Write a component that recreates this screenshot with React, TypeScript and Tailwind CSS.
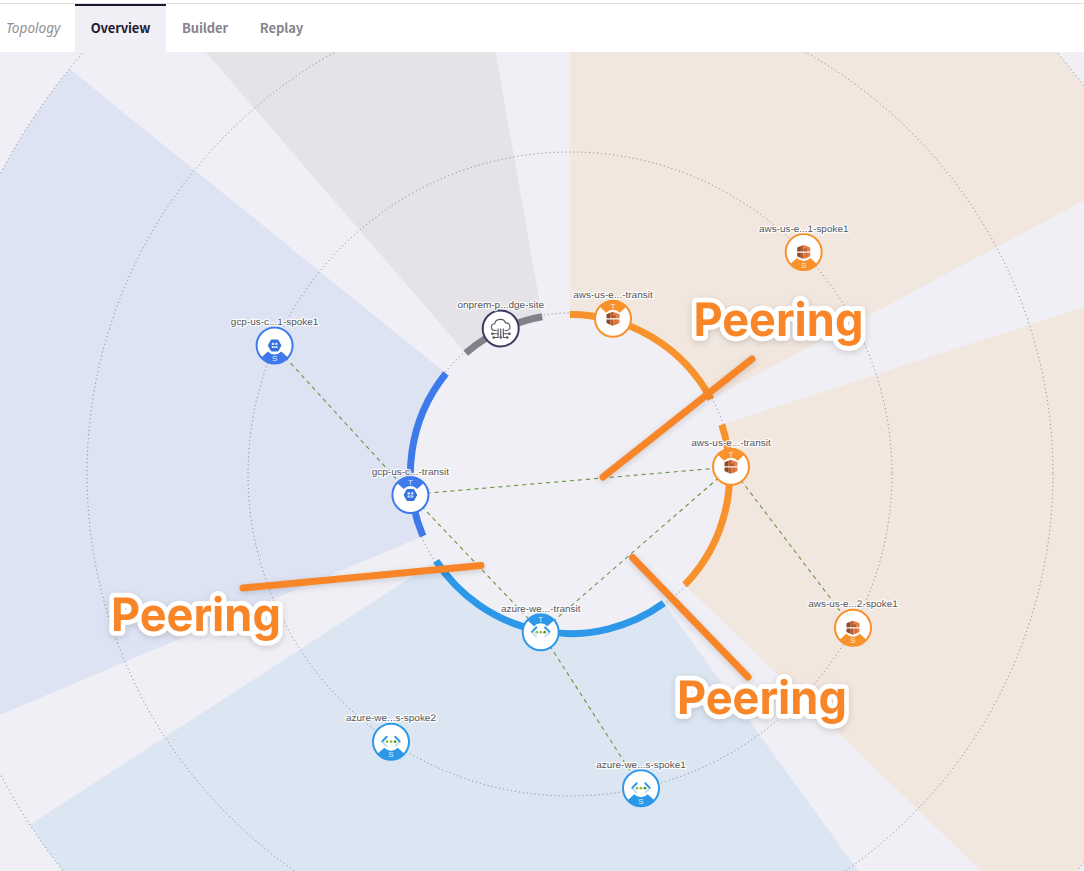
import React from "react";

type Kind = "aws" | "azure" | "gcp" | "onprem";

const CX = 570;
const CY = 474;

const COLORS: Record<Kind, string> = {
  aws: "#f8922c",
  azure: "#2e98e8",
  gcp: "#3f7aec",
  onprem: "#3f3964",
};

function polar(r: number, deg: number, cx = CX, cy = CY) {
  const a = (deg * Math.PI) / 180;
  return `${(cx + r * Math.sin(a)).toFixed(2)} ${(cy - r * Math.cos(a)).toFixed(2)}`;
}

function arc(r: number, a: number, b: number) {
  return `M${polar(r, a)}A${r} ${r} 0 0 1 ${polar(r, b)}`;
}

function ring(r0: number, r1: number, a: number, b: number, cx = CX, cy = CY) {
  return `M${polar(r0, a, cx, cy)}L${polar(r1, a, cx, cy)}A${r1} ${r1} 0 0 1 ${polar(r1, b, cx, cy)}L${polar(r0, b, cx, cy)}A${r0} ${r0} 0 0 0 ${polar(r0, a, cx, cy)}Z`;
}

const sectors = [
  { a: 0, b: 62, fill: "#f2e7df", stroke: "#f8922c" },
  { a: 72, b: 134, fill: "#f2e7df", stroke: "#f8922c" },
  { a: 144, b: 237, fill: "#dce6f3", stroke: "#2e98e8" },
  { a: 247.1, b: 309, fill: "#dee3f4", stroke: "#3f7aec" },
  { a: 319.2, b: 350, fill: "#e5e3e8", stroke: "#82818a" },
];

const links = [
  [274.5, 345.5, 410.5, 494.5],
  [410.5, 494.5, 731, 467],
  [410.5, 494.5, 541, 632],
  [731, 467, 541, 632],
  [541, 632, 641, 788],
  [731, 467, 853, 628],
];

interface NodeDef {
  x: number;
  y: number;
  kind: Kind;
  tag?: "T" | "S";
  label: string;
  w: number;
}

const nodes: NodeDef[] = [
  { x: 500.7, y: 328.5, kind: "onprem", label: "onprem-p...dge-site", w: 86.5 },
  { x: 613, y: 318.7, kind: "aws", tag: "T", label: "aws-us-e...-transit", w: 79.5 },
  { x: 803.7, y: 252, kind: "aws", tag: "S", label: "aws-us-e...1-spoke1", w: 89.5 },
  { x: 731, y: 466.8, kind: "aws", tag: "T", label: "aws-us-e...-transit", w: 79.5 },
  { x: 853, y: 627.8, kind: "aws", tag: "S", label: "aws-us-e...2-spoke1", w: 89.5 },
  { x: 641, y: 788.2, kind: "azure", tag: "S", label: "azure-we...s-spoke1", w: 89.5 },
  { x: 391, y: 741.7, kind: "azure", tag: "S", label: "azure-we...s-spoke2", w: 90 },
  { x: 540.7, y: 632.2, kind: "azure", tag: "T", label: "azure-we...-transit", w: 79.5 },
  { x: 410.4, y: 495, kind: "gcp", tag: "T", label: "gcp-us-c...-transit", w: 77.5 },
  { x: 274.6, y: 345.5, kind: "gcp", tag: "S", label: "gcp-us-c...1-spoke1", w: 87.5 },
];

function AwsIcon() {
  return (
    <g>
      <path d="M-6.5-4.5L-2.8-6V-.5H-6.5Z" fill="#8c4a2a" />
      <path d="M-2.8-6L0-7V-.5H-2.8Z" fill="#b35d31" />
      <path d="M0-7L6.5-4.5V-.5H3.2V-3H0Z" fill="#e87c42" />
      <path d="M0-3.5H3.2V-.5H0Z" fill="#b35d31" />
      <path d="M-6.5.7H-2.8V6L-6.5 4.3Z" fill="#8c4a2a" />
      <path d="M-2.8.7H0V7L-2.8 6Z" fill="#b35d31" />
      <path d="M0 .7H6.5V4.3L0 7Z" fill="#e87c42" />
      <path d="M3 .7V5.8" stroke="#b35d31" strokeWidth=".8" />
    </g>
  );
}

function AzureIcon() {
  return (
    <g fill="none" strokeWidth="2">
      <path d="M-9-.2L-4 4.8M9-.2L4 4.8" stroke="#c5e3f8" />
      <path d="M-3.8-5.4L-9.2.2M3.8-5.4L9.2.2" stroke="#2e98e8" />
      <circle cx="-4" cy="0" r="1.4" fill="#8fc33f" />
      <circle cx="0" cy="0" r="1.4" fill="#8fc33f" />
      <circle cx="4" cy="0" r="1.4" fill="#5c942c" />
    </g>
  );
}

function GcpIcon() {
  return (
    <g>
      <path
        d="M-3.3-5.5H3.3L6.3 0L3.3 5.5H-3.3L-6.3 0Z"
        fill="#3672dc"
        stroke="#3672dc"
        strokeWidth="1"
        strokeLinejoin="round"
      />
      <path d="M-2.8-2.7H-.5V-.4H-2.8ZM.6-2.7H2.9V-.4H.6ZM-2.8.6H2.9V2.5H-2.8Z" fill="#dce8fc" />
      <path d="M-1.3 1.3H1.4" stroke="#3672dc" strokeWidth=".7" />
    </g>
  );
}

function CloudIcon() {
  return (
    <g fill="none" stroke="#55555c" strokeWidth="1.1">
      <path d="M-4 2H-5.5C-10.5 2-10.5-4.6-6-4.8C-5-10.2 3.5-10.6 4.8-5.6C10.5-6 10.8 2 5.6 2H4" />
      <path d="M-2.6 0V5.2H-8M0 0V9M2.6 0V5.2H8.5M-2.6 5.2V9H-7M2.6 5.2V9H6" />
      <g fill="#55555c" stroke="none">
        <circle cx="-8.3" cy="5.2" r="1.3" />
        <circle cx="8.8" cy="5.2" r="1.3" />
        <circle cx="-7" cy="9" r="1.3" />
        <circle cx="6.5" cy="9" r="1.3" />
        <circle cx="0" cy="9" r="1.2" />
      </g>
    </g>
  );
}

const ICONS: Record<Kind, () => React.ReactElement> = {
  aws: AwsIcon,
  azure: AzureIcon,
  gcp: GcpIcon,
  onprem: CloudIcon,
};

function TopologyNode({ x, y, kind, tag, label, w }: NodeDef) {
  const color = COLORS[kind];
  const Icon = ICONS[kind];
  return (
    <g transform={`translate(${x} ${y})`}>
      <circle r="18" fill="#fff" stroke={color} strokeWidth="2" />
      {tag && (
        <path
          d={tag === "T" ? ring(9, 18, -48, 48, 0, 0) : ring(9, 18, 132, 228, 0, 0)}
          fill={color}
        />
      )}
      {tag && (
        <text y={tag === "T" ? -10 : 15.6} textAnchor="middle" fontSize="8" fill="#fff" fillOpacity=".85">
          {tag}
        </text>
      )}
      <Icon />
      <text
        y="-20.4"
        textAnchor="middle"
        fontSize="9.5"
        textLength={w}
        lengthAdjust="spacingAndGlyphs"
        textRendering="geometricPrecision"
        fill="#57575e"
        stroke="#fff"
        strokeOpacity=".85"
        strokeWidth="2.5"
        strokeLinejoin="round"
        paintOrder="stroke"
      >
        {label}
      </text>
    </g>
  );
}

const callouts = [
  { line: "M752 359L603 477", x: 693.4, y: 336.3 },
  { line: "M243 588L481 565.5", x: 110.9, y: 631.2 },
  { line: "M632.5 557.5L748 677", x: 676.9, y: 714 },
];

function Topology() {
  return (
    <svg className="block h-[819px] w-full bg-[#f0eff5] font-['Liberation_Sans',sans-serif]" viewBox="0 52 1084 819">
      {sectors.map((s) => (
        <path key={s.a} d={ring(160, 644, s.a, s.b)} fill={s.fill} />
      ))}
      {[161, 322, 483, 644].map((r) => (
        <circle key={r} cx={CX} cy={CY} r={r} fill="none" stroke="#787884" strokeWidth="1" strokeDasharray="1 3" />
      ))}
      {sectors.map((s) => (
        <path key={s.a} d={arc(159.6, s.a, s.b)} fill="none" stroke={s.stroke} strokeWidth="7" />
      ))}
      {links.map(([x1, y1, x2, y2], i) => (
        <line key={i} x1={x1} y1={y1} x2={x2} y2={y2} stroke="#6b9440" strokeWidth="1.1" strokeDasharray="4.2 3.8" />
      ))}
      {nodes.map((n, i) => (
        <TopologyNode key={i} {...n} />
      ))}
      {callouts.map((c) => (
        <g key={c.line}>
          <path
            d={c.line}
            stroke="#f88629"
            strokeWidth="7"
            strokeLinecap="round"
            className="drop-shadow-[0_2px_3px_rgba(0,0,0,0.15)]"
          />
          <text
            x={c.x}
            y={c.y}
            textLength="170"
            lengthAdjust="spacingAndGlyphs"
            textRendering="geometricPrecision"
            fontSize="46"
            fontFamily="Inter, 'Liberation Sans', sans-serif"
            fill="#f88629"
            stroke="#fff"
            strokeWidth="9.5"
            strokeLinejoin="round"
            paintOrder="stroke"
            className="font-bold drop-shadow-[0_2px_3px_rgba(0,0,0,0.15)]"
          >
            Peering
          </text>
        </g>
      ))}
    </svg>
  );
}

export default function App() {
  return (
    <div className="flex h-[871px] w-[1084px] flex-col overflow-hidden bg-white">
      <header className="flex h-[52px] shrink-0 pt-[3px] font-['Noto_Sans_CJK_SC',sans-serif] text-[13px]">
        <div className="flex w-full border-t border-[#dfdfe2]">
          <div className="flex w-[75px] items-center pl-[6px] font-['Noto_Sans',sans-serif] text-[13.6px] italic text-[#909094]">
            Topology
          </div>
          <nav className="flex font-bold text-[#85848d]">
            <a className="flex w-[91px] items-center justify-center border-t-2 border-[#1c1830] bg-[#f0eff5] pb-[2px] tracking-[-0.2px] text-[#1f1b33]">
              Overview
            </a>
            <a className="flex w-[78px] items-center justify-center tracking-[-0.1px]">Builder</a>
            <a className="flex w-[75px] items-center justify-center tracking-[-0.1px]">Replay</a>
          </nav>
        </div>
      </header>
      <main className="h-[819px]">
        <Topology />
      </main>
    </div>
  );
}
